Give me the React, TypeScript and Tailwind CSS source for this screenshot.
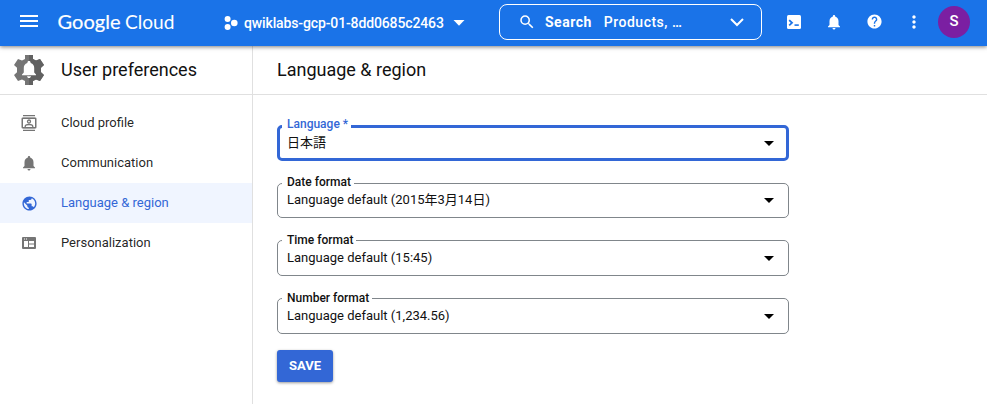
import type { ReactNode } from "react";
import {
  MdHelp,
  MdMenu,
  MdMoreVert,
  MdNotifications,
  MdPublic,
  MdSearch,
} from "react-icons/md";

function GoogleCloudLogo() {
  return (
    <svg width="118" height="26" className="ml-[19px] block shrink-0 fill-white font-['Lato',sans-serif]">
      <text x="-0.5" y="18.5" fontSize="20" fontWeight="400" stroke="white" strokeWidth="0.2" textLength="63" lengthAdjust="spacingAndGlyphs">
        Google
      </text>
      <text x="67" y="18.5" fontSize="20" fontWeight="400" textLength="49.5" lengthAdjust="spacingAndGlyphs">
        Cloud
      </text>
    </svg>
  );
}

function ProjectIcon() {
  return (
    <svg width="14" height="16" viewBox="0 0 14 16" fill="white" className="shrink-0">
      <circle cx="3.6" cy="4" r="3" />
      <circle cx="3.6" cy="12" r="3" />
      <circle cx="10.3" cy="8" r="3.3" />
    </svg>
  );
}

function ShellIcon() {
  return (
    <svg width="14" height="14" viewBox="0 0 14 14">
      <rect width="14" height="14" rx="1.5" fill="white" />
      <path d="M2.2 5.2 5 7.8 2.2 10.4" fill="none" stroke="#1a73e8" strokeWidth="1.8" />
      <path d="M7.500 10.100h4.300" stroke="#1a73e8" strokeWidth="1.600" />
    </svg>
  );
}

function PreferencesIcon() {
  return (
    <svg width="30" height="30" viewBox="0 0 30 30" className="shrink-0">
      <path
        d="M11 0h8v4l3 1.500 4-1.500 4 6-3 2.700v4.600l3 2.700-4 6-4-1.500-3 1.500v4h-8v-4l-3-1.500-4 1.500-4-6 3-2.700v-4.600l-3-2.700 4-6 4 1.500 3-1.500z"
        fill="#757575"
      />
      <path
        d="M15 0h4v4l3 1.500 4-1.500 4 6-3 2.700v4.600l3 2.700-4 6-4-1.500-3 1.500v4h-4z"
        fill="#616161"
      />
      <path
        d="M15 6c-1 0-1.600.6-1.600 1.500v.5c-2.600.7-3.600 2.700-3.600 5v4.600L8 19.400v.8h14v-.8l-1.800-1.800V13c0-2.300-1-4.300-3.600-5v-.5C16.600 6.600 16 6 15 6zM13 21.200c.2 1.200 1 1.800 2 1.800s1.800-.6 2-1.800z"
        fill="white"
      />
    </svg>
  );
}

function ProfileIcon() {
  return (
    <svg width="16" height="18" viewBox="0 0 16 18" fill="none" stroke="#757575">
      <path d="M2 2h12v14H2z" fill="#dddddd" stroke="none" />
      <path d="M2 1.500h12M2 16.500h12" />
      <rect x="1.250" y="4.250" width="13.500" height="9.500" rx="0.500" strokeWidth="1.500" fill="white" />
      <circle cx="8" cy="7.500" r="1.500" strokeWidth="1.300" />
      <path d="M4.200 13v-.5c0-1.200 2-2 3.800-2s3.800.8 3.800 2v.5" strokeWidth="1.300" />
    </svg>
  );
}

function PersonalizationIcon() {
  return (
    <svg width="14" height="12" viewBox="0 0 14 12">
      <rect width="14" height="12" rx="1" fill="#757575" />
      <path d="M2 4h4v6H2zM7 4h5v2.500H7zM7 7.500h5V10H7zM2 1.500h1v1H2zM4 1.500h1v1H4z" fill="white" />
    </svg>
  );
}

function Caret({ className }: { className: string }) {
  return (
    <svg width="12" height="6" viewBox="0 0 12 6" className={className}>
      <path d="M0.500 0h11L6 5.700z" fill="currentColor" />
    </svg>
  );
}

function SelectCaret() {
  return (
    <svg width="10" height="5" viewBox="0 0 10 5" className="mr-px">
      <path d="M0 0h10L5 5z" fill="black" />
    </svg>
  );
}

function TopBar() {
  return (
    <header className="relative z-10 flex h-[46px] items-center bg-[#1a73e8] text-white shadow-[0_1px_4px_rgba(0,0,0,0.5)]">
      <MdMenu className="mt-[-4px] ml-[17px] size-6 shrink-0" />
      <div className="-ml-[2px]">
        <GoogleCloudLogo />
      </div>
      <div className="mt-[-1px] ml-[48px] flex items-center">
        <ProjectIcon />
        <span className="ml-[6px] w-[200px] text-[14px] leading-5 font-medium tracking-[-0.13px] whitespace-nowrap">
          qwiklabs-gcp-01-8dd0685c2463
        </span>
        <Caret className="ml-[9px]" />
      </div>
      <div className="mt-[-2px] ml-[34px] flex h-9 w-[263px] shrink-0 items-center rounded-lg border border-white">
        <MdSearch className="ml-[18px] size-[18px]" />
        <span className="ml-[9px] text-[14px] font-bold tracking-[0.5px]">Search</span>
        <span className="ml-3 text-[14px] font-medium tracking-[0.5px]">Products, …</span>
        <svg width="14" height="9" viewBox="0 0 14 9" className="mr-[17px] ml-auto">
          <path d="M1 1l6 6 6-6" fill="none" stroke="white" strokeWidth="2" />
        </svg>
      </div>
      <div className="mt-[-3px] ml-[12px] flex items-center">
        <div className="flex w-10 justify-center"><ShellIcon /></div>
        <div className="flex w-10 justify-center"><MdNotifications className="size-[18px]" /></div>
        <div className="flex w-10 justify-center"><MdHelp className="size-[17px]" /></div>
        <div className="flex w-10 justify-center"><MdMoreVert className="size-5" /></div>
        <div className="ml-1 flex size-8 items-center justify-center rounded-full bg-[#7b1fa2] text-[15px] font-medium">
          S
        </div>
      </div>
    </header>
  );
}

function NavItem({ icon, label, active = false }: { icon: ReactNode; label: string; active?: boolean }) {
  return (
    <li className={active ? "flex h-10 items-center bg-[#f0f5ff] text-[#3367d6]" : "flex h-10 items-center text-black/87"}>
      <span className={active ? "ml-5 flex w-[18px] justify-center" : "ml-5 flex w-[18px] justify-center text-[#757575]"}>
        {icon}
      </span>
      <span className="ml-[23px] text-[13px] leading-5">{label}</span>
    </li>
  );
}

function Sidebar() {
  return (
    <aside className="w-[253px] shrink-0 border-r border-[#e0e0e0]">
      <div className="flex h-[49px] items-center border-b border-[#e0e0e0] pl-[14px]">
        <PreferencesIcon />
        <h1 className="ml-[17px] text-[18px] leading-6">User preferences</h1>
      </div>
      <ul className="pt-2">
        <NavItem icon={<ProfileIcon />} label="Cloud profile" />
        <NavItem icon={<MdNotifications className="size-[18px]" />} label="Communication" />
        <NavItem active icon={<MdPublic className="size-[17px]" />} label="Language & region" />
        <NavItem icon={<PersonalizationIcon />} label="Personalization" />
      </ul>
    </aside>
  );
}

type FieldVariant = "focused" | "compact" | "normal";

const boxStyles: Record<FieldVariant, string> = {
  focused: "h-9 border-3 border-[#3367d6] pr-[11px] pl-[7px]",
  compact: "h-[35px] border border-[#80868b] pr-[13px] pl-[9px] pb-px",
  normal: "h-9 border border-[#80868b] pr-[13px] pl-[9px]",
};

const labelStyles: Record<FieldVariant, string> = {
  focused: "-top-[12px] left-[2px] text-[#3367d6]",
  compact: "-top-[10px] left-[4px]",
  normal: "-top-[9px] left-[4px]",
};

function SelectField({ label, value, variant = "normal" }: { label: string; value: string; variant?: FieldVariant }) {
  return (
    <div className={`relative flex w-[512px] items-center justify-between rounded-[5px] ${boxStyles[variant]}`}>
      <span className={`absolute bg-white pr-[3px] pl-[5px] text-[12px] leading-4 font-medium ${labelStyles[variant]}`}>
        {label}
      </span>
      <span className="text-[13px] leading-5">{value}</span>
      <SelectCaret />
    </div>
  );
}

export default function App() {
  return (
    <div className="flex h-[404px] w-[987px] flex-col overflow-hidden bg-white font-['Roboto','Noto_Sans_CJK_JP',sans-serif] text-[#111]">
      <TopBar />
      <div className="flex flex-1">
        <Sidebar />
        <main className="flex-1">
          <div className="flex h-[49px] items-center border-b border-[#e0e0e0] pl-6">
            <h2 className="text-[18px] leading-6">Language & region</h2>
          </div>
          <form className="flex flex-col items-start gap-[22px] pt-[30px] pl-6">
            <SelectField variant="focused" label="Language *" value="日本語" />
            <SelectField variant="compact" label="Date format" value="Language default (2015年3月14日)" />
            <SelectField label="Time format" value="Language default (15:45)" />
            <SelectField label="Number format" value="Language default (1,234.56)" />
            <button
              type="button"
              className="-mt-[6px] h-8 w-14 rounded-[3px] bg-[#3367d6] text-[13px] font-bold text-white shadow-[0_1px_3px_rgba(0,0,0,0.4)]"
            >
              SAVE
            </button>
          </form>
        </main>
      </div>
    </div>
  );
}
